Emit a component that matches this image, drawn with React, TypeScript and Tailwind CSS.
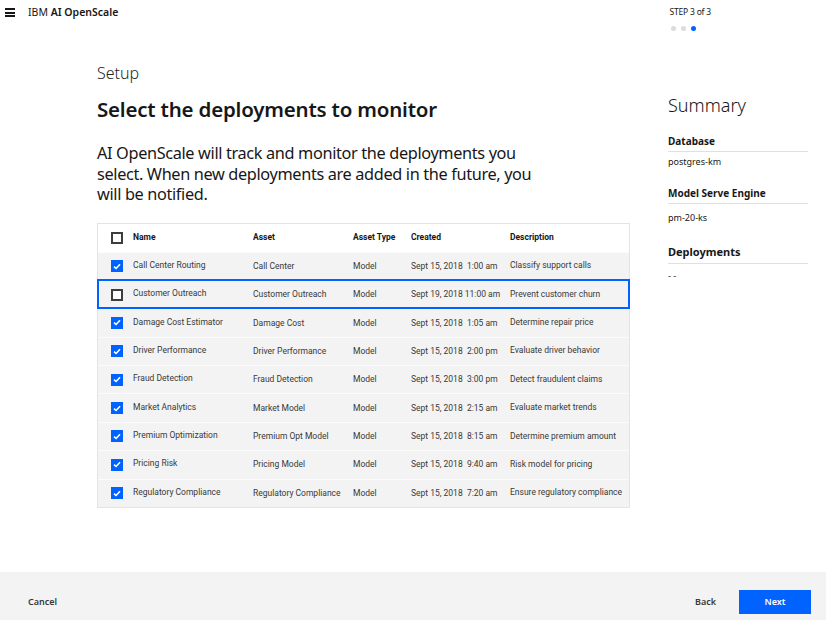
import React from "react";

type Row = { name: string; asset: string; type: string; created: string; desc: string; checked: boolean; focus?: boolean };

const rows: Row[] = [
  { name: "Call Center Routing", asset: "Call Center", type: "Model", created: "Sept 15, 2018  1:00 am", desc: "Classify support calls", checked: true },
  { name: "Customer Outreach", asset: "Customer Outreach", type: "Model", created: "Sept 19, 2018 11:00 am", desc: "Prevent customer churn", checked: false, focus: true },
  { name: "Damage Cost Estimator", asset: "Damage Cost", type: "Model", created: "Sept 15, 2018  1:05 am", desc: "Determine repair price", checked: true },
  { name: "Driver Performance", asset: "Driver Performance", type: "Model", created: "Sept 15, 2018  2:00 pm", desc: "Evaluate driver behavior", checked: true },
  { name: "Fraud Detection", asset: "Fraud Detection", type: "Model", created: "Sept 15, 2018  3:00 pm", desc: "Detect fraudulent claims", checked: true },
  { name: "Market Analytics", asset: "Market Model", type: "Model", created: "Sept 15, 2018  2:15 am", desc: "Evaluate market trends", checked: true },
  { name: "Premium Optimization", asset: "Premium Opt Model", type: "Model", created: "Sept 15, 2018  8:15 am", desc: "Determine premium amount", checked: true },
  { name: "Pricing Risk", asset: "Pricing Model", type: "Model", created: "Sept 15, 2018  9:40 am", desc: "Risk model for pricing", checked: true },
  { name: "Regulatory Compliance", asset: "Regulatory Compliance", type: "Model", created: "Sept 15, 2018  7:20 am", desc: "Ensure regulatory compliance", checked: true },
];

function Check({ checked }: { checked: boolean }) {
  if (checked) {
    return (
      <div className="w-[12px] h-[12px] bg-[#0062ff] flex items-center justify-center">
        <svg width="8" height="7" viewBox="0 0 8 7">
          <path d="M1 3.6 L3.1 5.5 L7 1.3" stroke="#fff" strokeWidth="1.6" fill="none" />
        </svg>
      </div>
    );
  }
  return <div className="w-[12px] h-[12px] border-2 border-[#3d3d3d] bg-white" />;
}

const grid = "grid grid-cols-[35px_120px_100px_58px_99px_1fr] items-center";

export default function App() {
  return (
    <div className="h-[620px] w-[826px] bg-white flex flex-col text-[#171717] font-['Noto_Sans',sans-serif] overflow-hidden">
      {/* top bar */}
      <div className="h-[40px] flex items-start relative">
        <div className="ml-[5px] mt-[8px] flex flex-col gap-[1.5px]">
          <div className="w-[10px] h-[2px] bg-[#171717]" />
          <div className="w-[10px] h-[2px] bg-[#171717]" />
          <div className="w-[10px] h-[2px] bg-[#171717]" />
        </div>
        <div className="ml-[13px] mt-[4px] text-[10.5px] leading-[16px]">
          IBM <span className="font-semibold">AI OpenScale</span>
        </div>
        <div className="ml-auto mr-[115px] mt-[5px] flex flex-col">
          <div className="text-[8.5px] leading-[14px] tracking-[-0.2px] text-[#171717]">STEP 3 of 3</div>
          <div className="flex gap-[5px] mt-[7px] ml-[1px]">
            <div className="w-[5px] h-[5px] rounded-full bg-[#dcdcdc]" />
            <div className="w-[5px] h-[5px] rounded-full bg-[#dcdcdc]" />
            <div className="w-[5px] h-[5px] rounded-full bg-[#0062ff]" />
          </div>
        </div>
      </div>

      {/* main */}
      <div className="flex-1 flex pl-[97px]">
        <div className="w-[533px] flex flex-col">
          <div className="mt-[23px] text-[16px] leading-[20px] font-light text-[#262626]">Setup</div>
          <div className="mt-[12px] text-[20.5px] leading-[28px] font-semibold tracking-[-0.2px]">Select the deployments to monitor</div>
          <div className="mt-[20px] text-[16.3px] leading-[20.5px] text-[#171717] tracking-[-0.35px]">
            AI OpenScale will track and monitor the deployments you<br />
            select. When new deployments are added in the future, you<br />
            will be notified.
          </div>
          <div className="mt-[18px] border border-[#e4e4e4] font-['Roboto',sans-serif]">
            <div className={`${grid} h-[28px] bg-white text-[8.5px] font-bold text-[#171717]`}>
              <div className="pl-[13px]"><Check checked={false} /></div>
              <div>Name</div>
              <div>Asset</div>
              <div>Asset Type</div>
              <div>Created</div>
              <div>Description</div>
            </div>
            {rows.map((r) => (
              <div
                key={r.name}
                className={`${grid} h-[28.375px] bg-[#f3f3f3] text-[8.5px] text-[#393939] border-t border-[#fbfbfb] ${r.focus ? "outline-2 outline-[#0062ff] -outline-offset-1 relative" : ""}`}
              >
                <div className="pl-[13px]"><Check checked={r.checked} /></div>
                <div className="-mt-[2px]">{r.name}</div>
                <div>{r.asset}</div>
                <div>{r.type}</div>
                <div className="whitespace-pre">{r.created}</div>
                <div className="-mt-[1px]">{r.desc}</div>
              </div>
            ))}
          </div>
        </div>

        {/* summary */}
        <div className="ml-[38px] w-[140px] flex flex-col">
          <div className="mt-[54px] text-[18px] leading-[22px] font-light">Summary</div>
          <div className="mt-[18px] text-[10px] leading-[14px] font-bold pb-[3px] border-b border-[#e0e0e0]">Database</div>
          <div className="mt-[3px] text-[9px] leading-[14px]">postgres-km</div>
          <div className="mt-[17px] text-[10px] leading-[14px] font-bold pb-[3px] border-b border-[#e0e0e0]">Model Serve Engine</div>
          <div className="mt-[7px] text-[9px] leading-[14px]">pm-20-ks</div>
          <div className="mt-[20px] text-[11px] leading-[14px] font-bold pb-[4px] border-b border-[#e0e0e0]">Deployments</div>
          <div className="mt-[5px] text-[9px] leading-[14px]">- -</div>
        </div>
      </div>

      {/* footer */}
      <div className="h-[48px] bg-[#f3f3f3] flex items-start pt-[18px] pl-[28px] pr-[15px]">
        <div className="h-[24px] flex items-center text-[9px] font-semibold text-[#393939]">Cancel</div>
        <div className="ml-auto h-[24px] flex items-center text-[9px] font-semibold text-[#393939] mr-[23px]">Back</div>
        <div className="w-[72px] h-[24px] bg-[#0062ff] text-white text-[9px] font-semibold flex items-center justify-center">Next</div>
      </div>
    </div>
  );
}
